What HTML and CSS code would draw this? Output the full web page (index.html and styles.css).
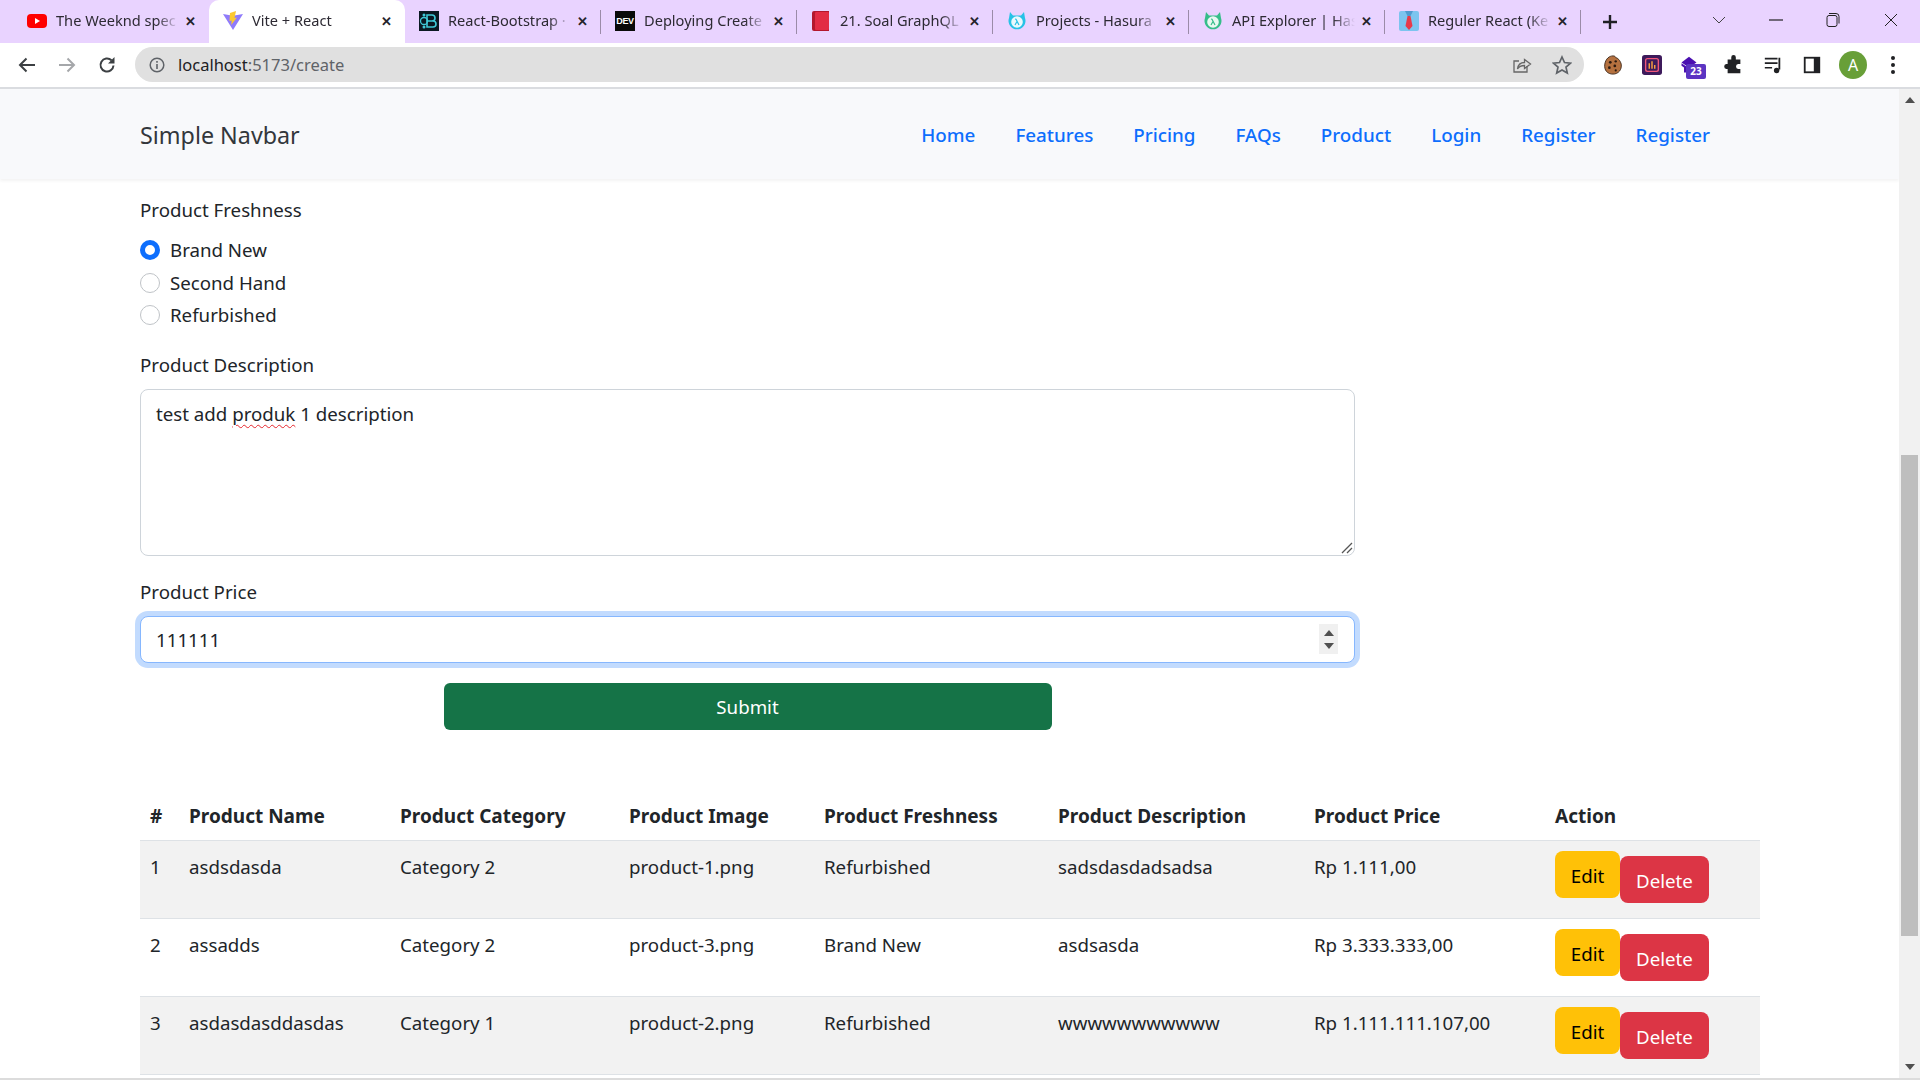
FILE: index.html
```html
<!DOCTYPE html>
<html lang="en">
<head>
  <meta charset="UTF-8">
  <meta name="viewport" content="width=device-width, initial-scale=1">
  <title>Vite + React</title>
  <link rel="stylesheet" href="styles.css">
</head>
<body>

  <div class="tabstrip">
    <div class="tab">
      <svg class="favicon" viewBox="0 0 20 20"><rect x="0" y="3" width="20" height="14" rx="4" fill="#f00"/><path d="M8 7l5 3-5 3z" fill="#fff"/></svg>
      <span class="tab-title">The Weeknd spec</span>
      <span class="tab-close">&#10005;</span>
    </div>
    <div class="tab tab-active">
      <svg class="favicon" viewBox="0 0 20 20"><path d="M0 3l10 1.8L20 3 10 19z" fill="#8f7bfb"/><path d="M13 0L7 2 6.5 10l2.2-.5-.5 4.5L14 6.500l-2.500.5z" fill="#fdc92f"/></svg>
      <span class="tab-title">Vite + React</span>
      <span class="tab-close">&#10005;</span>
    </div>
    <div class="tab tab-sep">
      <svg class="favicon" viewBox="0 0 20 20"><rect width="20" height="20" fill="#0b1822"/><circle cx="5" cy="10" r="3.500" fill="none" stroke="#41c9d8" stroke-width="1.300"/><path d="M8 4h5a3 3 0 0 1 0 6H8zm0 6h6a3 3 0 0 1 0 6H8z" fill="none" stroke="#41c9d8" stroke-width="1.600"/><circle cx="5" cy="4" r="1.500" fill="#41c9d8"/><circle cx="5" cy="16" r="1.500" fill="#41c9d8"/></svg>
      <span class="tab-title">React-Bootstrap ·</span>
      <span class="tab-close">&#10005;</span>
    </div>
    <div class="tab tab-sep">
      <span class="favicon dev-icon">DEV</span>
      <span class="tab-title">Deploying Create</span>
      <span class="tab-close">&#10005;</span>
    </div>
    <div class="tab tab-sep">
      <svg class="favicon" viewBox="0 0 20 20"><path d="M1 2a2 2 0 0 1 2-2h15v20H3a2 2 0 0 1-2-2z" fill="#b3172d"/><rect x="4" y="1" width="14" height="18" rx="1" fill="#e22b44"/></svg>
      <span class="tab-title">21. Soal GraphQL</span>
      <span class="tab-close">&#10005;</span>
    </div>
    <div class="tab tab-sep">
      <svg class="favicon" viewBox="0 0 20 20"><path d="M3 1l3 3.500h8L17 1l1 6a8.500 8.500 0 1 1-16 0z" fill="#27c2e6"/><circle cx="10" cy="11" r="5.800" fill="#eaf9fd"/><path d="M8 8l1 .2L12 14M10 10.500L8 14" fill="none" stroke="#27c2e6" stroke-width="1.200"/></svg>
      <span class="tab-title">Projects - Hasura</span>
      <span class="tab-close">&#10005;</span>
    </div>
    <div class="tab tab-sep">
      <svg class="favicon" viewBox="0 0 20 20"><path d="M3 1l3 3.500h8L17 1l1 6a8.500 8.500 0 1 1-16 0z" fill="#35bd8a"/><circle cx="10" cy="11" r="5.800" fill="#e8f8f1"/><path d="M8 8l1 .2L12 14M10 10.500L8 14" fill="none" stroke="#35bd8a" stroke-width="1.200"/></svg>
      <span class="tab-title">API Explorer | Has</span>
      <span class="tab-close">&#10005;</span>
    </div>
    <div class="tab tab-sep">
      <svg class="favicon" viewBox="0 0 20 20"><rect width="20" height="20" rx="2" fill="#7cc4ef"/><path d="M6 0h8l-2.500 5h-3z" fill="#4f9bd0"/><path d="M8.500 5h3l2 10-3.500 4-3.500-4z" fill="#e8394a"/></svg>
      <span class="tab-title">Reguler React (Ke</span>
      <span class="tab-close">&#10005;</span>
    </div>
    <span class="new-tab">
      <svg viewBox="0 0 16 16"><path d="M8 1v14M1 8h14" stroke="#202124" stroke-width="2.400"/></svg>
    </span>
    <div class="window-controls">
      <svg class="win-chevron" viewBox="0 0 14 8"><path d="M1 1l6 6 6-6" fill="none" stroke="#444" stroke-width="1"/></svg>
      <svg class="win-min" viewBox="0 0 14 2"><path d="M0 1h14" stroke="#222" stroke-width="1.200"/></svg>
      <svg class="win-max" viewBox="0 0 14 16"><path d="M3 1.500h7a3 3 0 0 1 3 3v7" fill="none" stroke="#222"/><rect x="1" y="3.500" width="10" height="11" rx="2" fill="none" stroke="#222"/></svg>
      <svg class="win-close" viewBox="0 0 14 14"><path d="M1 1l12 12M13 1L1 13" stroke="#222" stroke-width="1"/></svg>
    </div>
  </div>

  <div class="toolbar">
    <svg class="tool-icon" viewBox="0 0 20 20"><path d="M18 10H3M9.500 3.500L3 10l6.500 6.500" fill="none" stroke="#3c4043" stroke-width="2"/></svg>
    <svg class="tool-icon tool-muted" viewBox="0 0 20 20"><path d="M2 10h15M10.500 3.500L17 10l-6.500 6.500" fill="none" stroke="#a5a7aa" stroke-width="2"/></svg>
    <svg class="tool-icon" viewBox="0 0 20 20"><path d="M16.500 10.500a6.500 6.500 0 1 1-2-5.200" fill="none" stroke="#3c4043" stroke-width="2"/><path d="M17.500 2v6.500H11z" fill="#3c4043"/></svg>
    <div class="omnibox">
      <svg class="omni-info" viewBox="0 0 16 16"><circle cx="8" cy="8" r="6.800" fill="none" stroke="#5f6368" stroke-width="1.500"/><path d="M8 7v5M8 4v1.800" stroke="#5f6368" stroke-width="1.600"/></svg>
      <span class="url">localhost<span class="url-path">:5173/create</span></span>
      <svg class="omni-share" viewBox="0 0 20 20"><path d="M15 11v6H2V6h5" fill="none" stroke="#666" stroke-width="1.300"/><path d="M5.500 14c.5-4 3-6.500 7-6.500V4.500L18.500 9l-6 4.500v-3c-3 0-5.500 1-7 3.500z" fill="none" stroke="#666" stroke-width="1.300"/></svg>
      <svg class="omni-star" viewBox="0 0 20 20"><path d="M10 2l2.500 5.500 6 .6-4.500 4 1.300 5.900L10 15l-5.300 3 1.300-5.900-4.500-4 6-.6z" fill="none" stroke="#5f6368" stroke-width="1.700"/></svg>
    </div>
    <div class="extensions">
      <svg class="ext-icon" viewBox="0 0 22 22"><path d="M11 1c2 0 3 1 3 2 2 0 5 3 6 7 1 6-3 11-9 11S1 17 2 10c1-6 5-9 9-9z" fill="#b5713f" stroke="#3c2415"/><circle cx="8" cy="8" r="1.500" fill="#2b1a10"/><circle cx="14" cy="7" r="1.300" fill="#2b1a10"/><circle cx="7" cy="14" r="1.500" fill="#2b1a10"/><circle cx="13" cy="12" r="1.500" fill="#2b1a10"/><circle cx="14" cy="17" r="1.200" fill="#2b1a10"/></svg>
      <svg class="ext-icon" viewBox="0 0 22 22"><rect width="22" height="22" rx="3" fill="#3d1a5b"/><rect x="4" y="4" width="14" height="14" rx="2" fill="none" stroke="#f0577a" stroke-width="1.500"/><path d="M8 15V9M11 15V7M14 15v-4" stroke="#f9a03f" stroke-width="1.600"/></svg>
      <span class="ext-badge-wrap">
        <svg class="ext-icon" viewBox="0 0 24 22"><path d="M12 1l9 7-9 6-9-6z" fill="#4a0fb0"/><path d="M3 9l9 6 4-2.500V20H6v-6l-3-2z" fill="#4a0fb0"/></svg>
        <span class="ext-badge">23</span>
      </span>
      <svg class="ext-icon" viewBox="0 0 22 22"><path d="M8 2.500a2.500 2.500 0 0 1 5 0V5h5v5h-2.500a2.800 2.800 0 0 0 0 5.500H18V20H4v-4.500H2.500a2.800 2.800 0 0 1 0-5.500H4V5h4z" fill="#202124"/></svg>
      <svg class="ext-icon" viewBox="0 0 22 22"><path d="M2 4h14M2 9h14M2 14h8" stroke="#202124" stroke-width="1.800"/><path d="M18 3v13" stroke="#202124" stroke-width="2"/><circle cx="15" cy="17" r="3" fill="#202124"/></svg>
      <svg class="ext-icon" viewBox="0 0 22 22"><rect x="2" y="2" width="18" height="18" fill="#202124"/><rect x="4" y="4" width="9" height="14" fill="#fff"/></svg>
      <span class="avatar">A</span>
      <svg class="ext-dots" viewBox="0 0 6 20"><circle cx="3" cy="3" r="2" fill="#202124"/><circle cx="3" cy="10" r="2" fill="#202124"/><circle cx="3" cy="17" r="2" fill="#202124"/></svg>
    </div>
  </div>

  <div class="viewport">
    <div class="page">
      <nav class="navbar">
        <span class="brand">Simple Navbar</span>
        <div class="nav-links">
          <a href="#">Home</a>
          <a href="#">Features</a>
          <a href="#">Pricing</a>
          <a href="#">FAQs</a>
          <a href="#">Product</a>
          <a href="#">Login</a>
          <a href="#">Register</a>
          <a href="#">Register</a>
        </div>
      </nav>

      <main class="content">
        <form class="product-form">
          <div class="form-label">Product Freshness</div>
          <div class="radio-group">
            <label class="radio-row"><input type="radio" name="freshness" checked> Brand New</label>
            <label class="radio-row"><input type="radio" name="freshness"> Second Hand</label>
            <label class="radio-row"><input type="radio" name="freshness"> Refurbished</label>
          </div>

          <div class="form-label label-desc">Product Description</div>
          <div class="field-area">
            test add <span class="misspelled">produk</span> 1 description
            <svg class="resizer" viewBox="0 0 12 12"><path d="M11 1L1 11M11 6L6 11" stroke="#555" stroke-width="1.300"/></svg>
          </div>

          <div class="form-label label-price">Product Price</div>
          <div class="field-price">
            111111
            <span class="spinner">
              <svg viewBox="0 0 10 6"><path d="M5 0l5 6H0z" fill="#505050"/></svg>
              <svg viewBox="0 0 10 6"><path d="M5 6L0 0h10z" fill="#505050"/></svg>
            </span>
          </div>

          <button type="button" class="btn-submit">Submit</button>
        </form>

        <table class="product-table">
          <thead>
            <tr>
              <th>#</th>
              <th>Product Name</th>
              <th>Product Category</th>
              <th>Product Image</th>
              <th>Product Freshness</th>
              <th>Product Description</th>
              <th>Product Price</th>
              <th>Action</th>
            </tr>
          </thead>
          <tbody>
            <tr>
              <td>1</td>
              <td>asdsdasda</td>
              <td>Category 2</td>
              <td>product-1.png</td>
              <td>Refurbished</td>
              <td>sadsdasdadsadsa</td>
              <td>Rp 1.111,00</td>
              <td><div class="actions"><button type="button" class="btn btn-edit">Edit</button><button type="button" class="btn btn-delete">Delete</button></div></td>
            </tr>
            <tr>
              <td>2</td>
              <td>assadds</td>
              <td>Category 2</td>
              <td>product-3.png</td>
              <td>Brand New</td>
              <td>asdsasda</td>
              <td>Rp 3.333.333,00</td>
              <td><div class="actions"><button type="button" class="btn btn-edit">Edit</button><button type="button" class="btn btn-delete">Delete</button></div></td>
            </tr>
            <tr>
              <td>3</td>
              <td>asdasdasddasdas</td>
              <td>Category 1</td>
              <td>product-2.png</td>
              <td>Refurbished</td>
              <td>wwwwwwwwwww</td>
              <td>Rp 1.111.111.107,00</td>
              <td><div class="actions"><button type="button" class="btn btn-edit">Edit</button><button type="button" class="btn btn-delete">Delete</button></div></td>
            </tr>
          </tbody>
        </table>
      </main>
    </div>

    <div class="scrollbar">
      <svg class="scroll-arrow" viewBox="0 0 10 6"><path d="M5 0l5 6H0z" fill="#505050"/></svg>
      <div class="scroll-track"><div class="scroll-thumb"></div></div>
      <svg class="scroll-arrow" viewBox="0 0 10 6"><path d="M5 6L0 0h10z" fill="#505050"/></svg>
    </div>
  </div>

  <div class="bottom-line"></div>

</body>
</html>
```

FILE: styles.css
```css
* {
  box-sizing: border-box;
}
html, body {
  height: 100%;
}
body {
  margin: 0;
  display: flex;
  flex-direction: column;
  height: 1080px;
  overflow: hidden;
  font-family: "Noto Sans", "Open Sans", Arial, sans-serif;
  font-size: 18.7px;
  line-height: 30px;
  color: #212529;
  background-color: #ffffff;
}

/* browser tabs */
.tabstrip {
  display: flex;
  align-items: stretch;
  height: 43px;
  padding-left: 13px;
  background-color: #e9d3ff;
  flex-shrink: 0;
}
.tab {
  position: relative;
  display: flex;
  align-items: center;
  width: 196px;
  padding: 0 12px 2px 14px;
  font-size: 14.6px;
  line-height: 20px;
  color: #2d2a33;
}
.tab-active {
  background-color: #ffffff;
  border-radius: 10px 10px 0 0;
  margin-top: 0;
}
.tab-sep::after {
  content: "";
  position: absolute;
  right: 0;
  top: 10px;
  height: 24px;
  width: 1px;
  background-color: #9b8ba8;
}
.favicon {
  width: 20px;
  height: 20px;
  flex-shrink: 0;
  margin-right: 9px;
}
.dev-icon {
  display: block;
  background-color: #0a0a0a;
  color: #ffffff;
  font-family: "Liberation Sans", Arial, sans-serif;
  font-size: 9px;
  font-weight: 700;
  line-height: 20px;
  text-align: center;
  letter-spacing: -0.3px;
}
.tab-title {
  flex: 1;
  min-width: 0;
  margin-top: -2px;
  white-space: nowrap;
  -webkit-mask-image: linear-gradient(to right, #000 82%, transparent 100%);
  mask-image: linear-gradient(to right, #000 82%, transparent 100%);
}
.tab-close {
  width: 14px;
  margin-left: 4px;
  font-size: 13px;
  font-weight: 700;
  text-align: center;
  color: #26232b;
}
.new-tab {
  display: flex;
  align-items: center;
  margin-left: 21px;
}
.new-tab svg {
  width: 16px;
  height: 16px;
}
.window-controls {
  display: flex;
  align-items: center;
  margin-left: auto;
  padding-right: 22px;
  padding-bottom: 4px;
}
.win-chevron {
  width: 14px;
  height: 8px;
  margin-right: 43px;
}
.win-min {
  width: 14px;
  height: 2px;
  margin-right: 43px;
}
.win-max {
  width: 14px;
  height: 16px;
  margin-right: 44px;
}
.win-close {
  width: 14px;
  height: 14px;
}

/* browser toolbar */
.toolbar {
  display: flex;
  align-items: center;
  height: 46px;
  padding: 0 0 1px 17px;
  background-color: #ffffff;
  border-bottom: 2px solid #dadce0;
  flex-shrink: 0;
}
.tool-icon {
  width: 20px;
  height: 20px;
  margin-right: 20px;
}
.omnibox {
  display: flex;
  align-items: center;
  width: 1449px;
  height: 35px;
  margin-left: -2px;
  padding: 0 10px 0 14px;
  border-radius: 18px;
  background-color: #e0e0e0;
}
.omni-info {
  width: 16px;
  height: 16px;
  margin-right: 13px;
}
.url {
  flex: 1;
  font-size: 16.500px;
  color: #202124;
}
.url-path {
  color: #5f6368;
}
.omni-share {
  width: 20px;
  height: 20px;
  margin-right: 20px;
}
.omni-star {
  width: 20px;
  height: 20px;
  margin-right: 2px;
}
.extensions {
  display: flex;
  align-items: center;
  margin-left: 19px;
}
.ext-icon {
  display: block;
  width: 20px;
  height: 20px;
  margin-right: 19px;
}
.ext-badge-wrap {
  position: relative;
  display: block;
  margin-left: -2px;
  margin-right: 6px;
}
.ext-badge {
  position: absolute;
  left: 7px;
  top: 9px;
  width: 20px;
  height: 15px;
  border-radius: 2px;
  background-color: #5b34c2;
  color: #ffffff;
  font-size: 10px;
  font-weight: 700;
  line-height: 15px;
  text-align: center;
}
.avatar {
  width: 28px;
  height: 28px;
  margin-left: -2px;
  border-radius: 50%;
  background-color: #689f38;
  color: #ffffff;
  font-size: 16px;
  line-height: 28px;
  text-align: center;
}
.ext-dots {
  width: 6px;
  height: 20px;
  margin-left: 23px;
}

/* page area */
.viewport {
  display: flex;
  flex: 1;
  min-height: 0;
}
.page {
  flex: 1;
  min-width: 0;
  overflow: hidden;
}
.navbar {
  position: relative;
  display: flex;
  align-items: center;
  justify-content: space-between;
  height: 90px;
  padding: 2px 189px 0 140px;
  background-color: #f8f9fb;
  box-shadow: 0 2px 3px rgba(0,0,0,0.05);
}
.brand {
  font-size: 23.3px;
  color: #33373b;
}
.nav-links {
  display: flex;
  gap: 40px;
  font-size: 18.8px;
  font-weight: 500;
}
.nav-links a {
  color: #0d6efd;
  text-decoration: none;
}
.content {
  padding: 16px 0 0 140px;
}
.product-form {
  width: 1215px;
}
.form-label {
  height: 30px;
}
.radio-group {
  margin-top: 9px;
}
.radio-row {
  display: flex;
  align-items: center;
  height: 32.500px;
}
.radio-row input {
  appearance: none;
  width: 20px;
  height: 20px;
  margin: 0 10px 0 0;
  border: 1px solid #bfc3c7;
  border-radius: 50%;
  background-color: #ffffff;
}
.radio-row input:checked {
  border: 5px solid #0d6efd;
}
.label-desc {
  margin-top: 18px;
}
.field-area {
  position: relative;
  height: 167px;
  margin-top: 9px;
  padding: 9px 15px 7px;
  border: 1px solid #ced4da;
  border-radius: 8px;
  background-color: #ffffff;
}
.misspelled {
  text-decoration: underline wavy #e5262c 1px;
  text-underline-offset: 3px;
}
.resizer {
  position: absolute;
  right: 1px;
  bottom: 1px;
  width: 12px;
  height: 12px;
}
.label-price {
  margin-top: 21px;
}
.field-price {
  display: flex;
  align-items: center;
  justify-content: space-between;
  height: 47px;
  margin-top: 9px;
  padding: 2px 16px 0 15px;
  border: 1px solid #86b7fe;
  border-radius: 8px;
  background-color: #ffffff;
  box-shadow: 0 0 0 5px rgba(13,110,253,0.25);
}
.spinner {
  display: flex;
  flex-direction: column;
  align-items: center;
  justify-content: center;
  gap: 7px;
  width: 19px;
  height: 30px;
  margin-top: -2px;
  background-color: #f0f0f0;
}
.spinner svg {
  width: 10px;
  height: 6px;
}
.btn-submit {
  display: block;
  width: 608px;
  height: 47px;
  margin: 20px auto 0;
  padding: 2px 0 0;
  border: none;
  border-radius: 6px;
  background-color: #157347;
  color: #ffffff;
  font: inherit;
}

/* product table */
.product-table {
  width: 1620px;
  margin-top: 60px;
  border-collapse: collapse;
  table-layout: fixed;
}
.product-table th,
.product-table td {
  padding: 11px 10px 9px;
  text-align: left;
  vertical-align: top;
  border-bottom: 1px solid #dee2e6;
}
.product-table th {
  font-size: 19px;
  font-weight: 700;
  border-bottom-width: 1.500px;
}
.product-table td {
  height: 78px;
}
.product-table th:nth-child(1) { width: 39px; }
.product-table th:nth-child(2) { width: 211px; }
.product-table th:nth-child(3) { width: 229px; }
.product-table th:nth-child(4) { width: 195px; }
.product-table th:nth-child(5) { width: 234px; }
.product-table th:nth-child(6) { width: 256px; }
.product-table th:nth-child(7) { width: 241px; }
.product-table tbody tr:nth-child(odd) {
  background-color: #f2f2f2;
}
.actions {
  display: flex;
  align-items: flex-start;
  margin-top: -1px;
}
.btn {
  height: 47px;
  padding: 3px 0 0;
  border: none;
  border-radius: 8px;
  font: inherit;
}
.btn-edit {
  width: 65px;
  background-color: #ffc107;
  color: #000000;
}
.btn-delete {
  width: 89px;
  margin-top: 5px;
  background-color: #dc3545;
  color: #ffffff;
}

/* page scrollbar */
.scrollbar {
  display: flex;
  flex-direction: column;
  align-items: center;
  width: 21px;
  background-color: #f1f1f1;
  flex-shrink: 0;
}
.scroll-arrow {
  width: 10px;
  height: 6px;
  margin: 8px 0;
  flex-shrink: 0;
}
.scroll-track {
  flex: 1;
  width: 100%;
  padding: 0 2px;
}
.scroll-thumb {
  height: 481px;
  margin-top: 344px;
  background-color: #bebebe;
}
.bottom-line {
  height: 2px;
  background-color: #dcdcdc;
  flex-shrink: 0;
}
```
